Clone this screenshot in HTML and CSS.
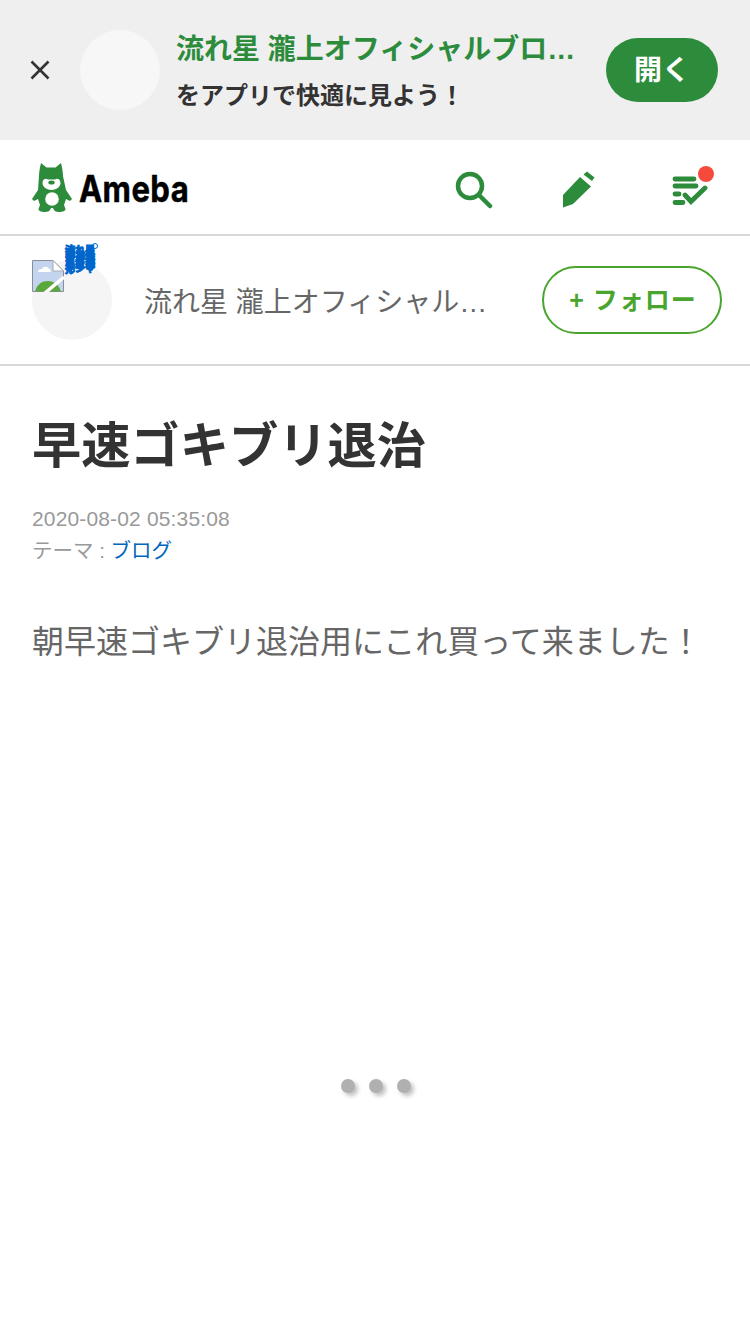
FILE: index.html
```html
<!DOCTYPE html>
<html lang="ja">
<head>
    <meta charset="UTF-8">
    <meta name="viewport" content="width=device-width, initial-scale=1.0">
    <title>早速ゴキブリ退治</title>
    <link rel="stylesheet" href="styles.css">
</head>
<body>
    <!-- App banner -->
    <div class="app-banner">
        <svg class="close-icon" width="20" height="20" viewBox="0 0 20 20">
            <path d="M1.500 1.500L18.500 18.500M18.500 1.500L1.500 18.500" stroke="#333" stroke-width="2.600" fill="none"/>
        </svg>
        <div class="banner-avatar"></div>
        <div class="banner-text">
            <p class="banner-title">流れ星 瀧上オフィシャルブロ…</p>
            <p class="banner-sub">をアプリで快適に見よう！</p>
        </div>
        <a class="open-button">開く</a>
    </div>

    <!-- Site header -->
    <header class="site-header">
        <div class="logo">
            <svg class="logo-bear" width="42" height="50" viewBox="0 0 42 50">
                <path fill="#2d8c3c" d="M10 1L15.500 5.500H24.500L30 1C31 5 32 10 32 14L35 28L41 37L39 39L35 37L33 43L34.500 47C34.500 49 32 50 28 50C25 50 23 49 22 46H20C19 49 17 50 14 50C10 50 7.500 49 7.500 47L9 43L7 37L3 39L1 37L7 28L8 14C8 10 9 5 10 1Z"/>
                <path fill="#fff" d="M11.500 21C11.500 17 15 16 17 17.500H24C26 16 29.500 17 29.500 21C29.500 25 25 28 20.500 28C16 28 11.500 25 11.500 21Z"/>
                <ellipse fill="#2d8c3c" cx="20.500" cy="20.500" rx="3.200" ry="2"/>
                <circle fill="#fff" cx="21" cy="37" r="6.800"/>
            </svg>
            <span class="logo-text">Ameba</span>
        </div>
        <nav class="header-icons">
            <svg width="38" height="38" viewBox="0 0 38 38">
                <circle cx="15" cy="15" r="12" stroke="#2d8c3c" stroke-width="4.500" fill="none"/>
                <path d="M24 24L35 35" stroke="#2d8c3c" stroke-width="4.500" stroke-linecap="round"/>
            </svg>
            <svg width="34" height="38" viewBox="0 0 34 38">
                <path fill="#2d8c3c" d="M18 6L29 15.500L11 33L1 36.500V24Z"/>
                <path fill="#2d8c3c" d="M21.500 3.500L25 0.500L32.500 6.500L30 10Z"/>
            </svg>
            <div class="notice-icon">
                <svg width="36" height="34" viewBox="0 0 36 34">
                    <g stroke="#2d8c3c" stroke-width="4.800" stroke-linecap="round" fill="none">
                        <path d="M3 4H22M3 11H24M3 19H7M3 27.500H11"/>
                        <path d="M13 20L19 26.500L33 13"/>
                    </g>
                </svg>
                <span class="notice-dot"></span>
            </div>
        </nav>
    </header>

    <!-- Blog author -->
    <div class="author-row">
        <div class="author-avatar">
            <svg class="broken-image" width="32" height="32" viewBox="0 0 32 32">
                <path fill="#c4d4ee" stroke="#8a8f96" d="M0.500 0.500H21L31.500 11V31.500H0.500Z"/>
                <path fill="#fff" stroke="#a8adb3" d="M21 0.500V11H31.500Z"/>
                <path fill="#fff" d="M6 12C6 9 9 9 10 9C11 6 16 6 17 9C19 9 20 12 18 12Z"/>
                <path fill="#5aa83c" d="M3 31.500C5 24 10 21 16 21C22 21 27 25 29 31.500Z"/>
                <path stroke="#fff" stroke-width="3.500" d="M13 33L32 17"/>
            </svg>
            <div class="broken-alt">流れ星瀧上オフィシャルブログ流れ星瀧上オフィシャル</div>
        </div>
        <div class="author-name">流れ星 瀧上オフィシャル…</div>
        <a class="follow-button"><span class="follow-plus">+</span>フォロー</a>
    </div>

    <!-- Entry -->
    <main class="entry">
        <h1 class="entry-title">早速ゴキブリ退治</h1>
        <div class="entry-meta">
            <div>2020-08-02 05:35:08</div>
            <div class="entry-theme">テーマ : <a class="theme-link">ブログ</a></div>
        </div>
        <p class="entry-body">朝早速ゴキブリ退治用にこれ買って来ました！</p>
        <div class="loading">
            <span class="loading-dot"></span>
            <span class="loading-dot"></span>
            <span class="loading-dot"></span>
        </div>
    </main>
</body>
</html>
```

FILE: styles.css
```css
body {
    margin: 0;
    padding: 0;
    background-color: #fff;
    color: #333;
    font-family: "Liberation Sans", "Noto Sans CJK JP", sans-serif;
}

p, h1 {
    margin: 0;
}

.app-banner {
    display: flex;
    align-items: center;
    height: 140px;
    background-color: #efefef;
}

.close-icon {
    margin-left: 30px;
}

.banner-avatar {
    width: 80px;
    height: 80px;
    margin-left: 30px;
    border-radius: 50%;
    background-color: #f7f7f7;
}

.banner-text {
    width: 414px;
    margin-left: 16px;
    padding-top: 6px;
    font-weight: bold;
}

.banner-title {
    color: #2d8c3c;
    font-size: 28px;
    line-height: 36px;
    white-space: nowrap;
}

.banner-sub {
    margin-top: 10px;
    font-size: 24px;
    line-height: 36px;
}

.open-button {
    width: 112px;
    height: 64px;
    margin-left: 16px;
    border-radius: 32px;
    background-color: #2d8c3c;
    color: #fff;
    font-size: 28px;
    font-weight: bold;
    line-height: 66px;
    text-align: center;
}

.site-header {
    display: flex;
    justify-content: space-between;
    align-items: center;
    height: 94px;
    padding: 0 42px 0 31px;
    border-bottom: 2px solid #d8d8d8;
}

.logo {
    display: flex;
    align-items: center;
    gap: 6px;
}

.logo-text {
    margin-top: 2px;
    color: #000;
    font-family: Inter, sans-serif;
    font-size: 37px;
    font-weight: 700;
    letter-spacing: 0.5px;
    transform: scaleX(0.84);
    transform-origin: left center;
    -webkit-text-stroke: 0.5px #000;
}

.header-icons {
    display: flex;
    align-items: center;
    gap: 69px;
    margin-top: 6px;
}

.notice-icon {
    position: relative;
    width: 36px;
    height: 34px;
    margin-top: 4px;
    margin-left: 7px;
}

.notice-dot {
    position: absolute;
    top: -9px;
    right: -6px;
    width: 16px;
    height: 16px;
    border-radius: 50%;
    background-color: #f44b3c;
}

.author-row {
    display: flex;
    align-items: center;
    height: 128px;
    padding: 0 28px 0 32px;
    border-bottom: 2px solid #d8d8d8;
}

.author-avatar {
    position: relative;
    width: 80px;
    height: 80px;
    border-radius: 50%;
    background-color: #f5f5f5;
}

.broken-image {
    position: absolute;
    top: 0;
    left: 0;
}

.broken-alt {
    position: absolute;
    top: -10px;
    left: 33px;
    width: 30px;
    color: #0066cc;
    font-size: 10px;
    font-weight: bold;
    line-height: 2.500px;
    word-break: break-all;
    -webkit-text-stroke: 1px #0066cc;
}

.broken-alt::after {
    content: "";
    position: absolute;
    top: -7px;
    right: -3px;
    width: 4px;
    height: 4px;
    border: 1px solid #0066cc;
    border-radius: 50%;
}

.author-name {
    flex: 1;
    margin-left: 32px;
    color: #666;
    font-size: 28px;
    white-space: nowrap;
}

.follow-button {
    width: 176px;
    height: 64px;
    border: 2px solid #4aa52e;
    border-radius: 34px;
    color: #4aa52e;
    font-size: 25px;
    font-weight: bold;
    letter-spacing: 1px;
    line-height: 64px;
    text-align: center;
}

.follow-plus {
    margin-right: 8px;
    margin-left: 2px;
}

.entry {
    min-height: 921px;
    padding: 47px 32px 0;
}

.entry-title {
    font-size: 49.250px;
    line-height: 66px;
}

.entry-meta {
    margin-top: 24px;
    color: #999;
    font-size: 21px;
    letter-spacing: 0.150px;
    line-height: 32px;
}

.entry-theme {
    font-size: 20.500px;
    letter-spacing: 0;
}

.theme-link {
    color: #0066bb;
}

.entry-body {
    margin-top: 47px;
    color: #666;
    font-size: 32px;
    line-height: 56px;
}

.loading {
    display: flex;
    justify-content: center;
    gap: 14px;
    margin-top: 409px;
    margin-left: 2px;
}

.loading-dot {
    width: 14px;
    height: 14px;
    border-radius: 50%;
    background-color: #b0b0b0;
    box-shadow: 3px 3px 4px rgba(0, 0, 0, 0.25);
}
```
